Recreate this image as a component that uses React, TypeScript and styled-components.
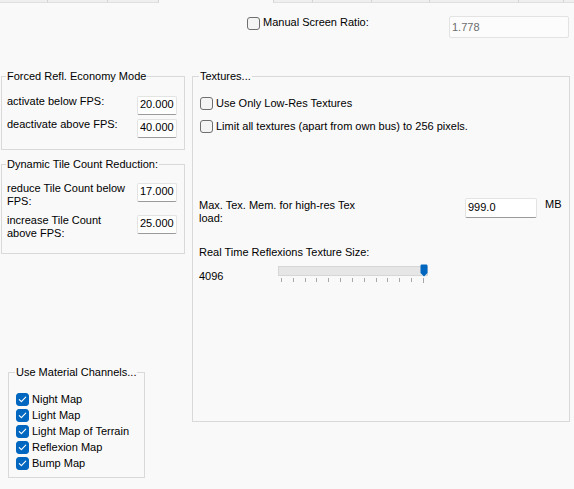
import React from "react";
import styled, { createGlobalStyle } from "styled-components";

const Global = createGlobalStyle`
  html, body { margin: 0; padding: 0; background: #f9f9f9; }
  body { font-family: "Liberation Sans", Arial, sans-serif; font-size: 11px; color: #000; }
  * { box-sizing: border-box; }
`;

const Page = styled.div`
  width: 574px;
  height: 489px;
  overflow: hidden;
  background: #f9f9f9;
  display: flex;
  flex-direction: column;
  font-family: "Liberation Sans", Arial, sans-serif;
  font-size: 11px;
  line-height: 13px;
  color: #000;
`;

const TabStrip = styled.div`
  display: flex;
  flex: none;
  height: 3px;
`;

const TabStub = styled.div<{ $w: number; $edge: "left" | "right" }>`
  flex: none;
  width: ${(p) => p.$w}px;
  height: 3px;
  background: #efefef;
  border-bottom: 1px solid #e0e0e0;
  ${(p) => (p.$edge === "left" ? "border-right: 1px solid #d4d4d4;" : "border-left: 1px solid #d4d4d4;")}
`;

const TabGap = styled.div<{ $w: number }>`
  flex: none;
  width: ${(p) => p.$w}px;
`;

const TopRow = styled.div`
  display: flex;
  align-items: flex-start;
  flex: none;
  height: 22px;
  margin-top: 13px;
  padding-left: 247px;
  padding-right: 5px;
`;

const CheckRow = styled.div<{ $h?: number }>`
  display: flex;
  align-items: center;
  gap: 3px;
  height: ${(p) => p.$h ?? 13}px;
  white-space: nowrap;
`;

const Box = styled.span<{ $checked?: boolean; $nudge?: number }>`
  flex: none;
  width: 13px;
  height: 13px;
  margin-left: ${(p) => p.$nudge ?? 0}px;
  border-radius: 3px;
  display: inline-flex;
  align-items: center;
  justify-content: center;
  background: ${(p) => (p.$checked ? "#0067c0" : "#f4f4f4")};
  border: 1px solid ${(p) => (p.$checked ? "#0067c0" : "#6f6f6f")};
`;

const TopCheck = styled(CheckRow)`
  align-items: flex-start;
  height: auto;
  & > span:first-child {
    margin-top: 1px;
  }
`;

const Field = styled.input<{ $w: number; $h: number; $disabled?: boolean }>`
  flex: none;
  width: ${(p) => p.$w}px;
  height: ${(p) => p.$h}px;
  margin: 0;
  padding: 0 2px 3px;
  font: inherit;
  line-height: 13px;
  color: ${(p) => (p.$disabled ? "#6d6d6d" : "#000")};
  background: ${(p) => (p.$disabled ? "#fcfcfc" : "#ffffff")};
  border: 1px solid #e3e3e3;
  border-bottom-color: ${(p) => (p.$disabled ? "#e3e3e3" : "#9a9a9a")};
  border-radius: 2px;
  outline: none;
`;

const RatioField = styled(Field)`
  margin-left: auto;
  padding: 0 2px;
`;

const Main = styled.div`
  display: flex;
  align-items: flex-start;
  flex: none;
  margin-top: 32px;
`;

const LeftCol = styled.div`
  display: flex;
  flex-direction: column;
  flex: none;
  width: 184px;
  margin-left: 1px;
`;

const Group = styled.fieldset<{ $w?: number; $h?: number; $mt?: number; $ml?: number }>`
  margin: ${(p) => p.$mt ?? 0}px 0 0 ${(p) => p.$ml ?? 0}px;
  padding: 0;
  min-width: 0;
  width: ${(p) => (p.$w ? `${p.$w}px` : "auto")};
  height: ${(p) => (p.$h ? `${p.$h}px` : "auto")};
  border: 1px solid #d9d9d9;
  flex: none;
`;

const Legend = styled.legend<{ $indent: number }>`
  padding: 0 1px;
  margin-left: ${(p) => p.$indent}px;
  line-height: 13px;
  white-space: nowrap;
`;

const GroupBody = styled.div<{ $pad: string; $gap?: number }>`
  display: flex;
  flex-direction: column;
  padding: ${(p) => p.$pad};
  gap: ${(p) => p.$gap ?? 0}px;
`;

const FpsRow = styled.div`
  display: grid;
  grid-template-columns: 1fr 40px;
  align-items: start;
`;

const FpsLabel = styled.span`
  max-width: 122px;
  line-height: 13px;
`;

const FpsField = styled(Field)`
  margin-top: 1px;
  padding: 0 2px 3px;
`;

const MemRow = styled.div`
  display: grid;
  grid-template-columns: 266px 72px auto;
  align-items: start;
  margin-top: 65px;
`;

const MemLabel = styled.span`
  max-width: 170px;
  margin-top: 1px;
`;

const Unit = styled.span`
  margin-left: 8px;
`;

const SizeLabel = styled.div`
  margin-top: 21px;
`;

const SliderRow = styled.div`
  display: grid;
  grid-template-columns: 79px 150px;
  margin-top: 5px;
`;

const SliderValue = styled.span`
  margin-top: 6px;
`;

const Slider = styled.div`
  position: relative;
  height: 20px;
`;

const Track = styled.div`
  margin-top: 2px;
  height: 10px;
  background: #e6e6e6;
  border: 1px solid #d6d6d6;
`;

const Ticks = styled.div`
  display: flex;
  justify-content: space-between;
  margin-top: 2px;
  padding: 0 4px 0 3px;
`;

const Tick = styled.span<{ $long?: boolean }>`
  width: 1px;
  height: ${(p) => (p.$long ? 5 : 4)}px;
  background: #a6a6a6;
`;

const Thumb = styled.svg`
  position: absolute;
  top: 0;
  right: 0;
  display: block;
`;

const Check = () => (
  <svg width="9" height="9" viewBox="0 0 9 9">
    <path d="M1.3 4.6 L3.4 6.7 L7.7 2.2" fill="none" stroke="#ffffff" strokeWidth="1.1" strokeLinecap="round" strokeLinejoin="round" />
  </svg>
);

const CheckBox = ({ checked, nudge }: { checked?: boolean; nudge?: number }) => (
  <Box $checked={checked} $nudge={nudge}>{checked ? <Check /> : null}</Box>
);

const leftTabs = [48, 60, 51];
const rightTabs = [39, 59, 58, 89, 45, 11];
const materials = ["Night Map", "Light Map", "Light Map of Terrain", "Reflexion Map", "Bump Map"];

export default function App() {
  return (
    <>
      <Global />
      <Page>
        <TabStrip>
          {leftTabs.map((w, i) => (
            <TabStub key={`l${i}`} $w={w} $edge="left" />
          ))}
          <TabGap $w={114} />
          {rightTabs.map((w, i) => (
            <TabStub key={`r${i}`} $w={w} $edge="right" />
          ))}
        </TabStrip>

        <TopRow>
          <TopCheck>
            <CheckBox />
            <span>Manual Screen Ratio:</span>
          </TopCheck>
          <RatioField $w={120} $h={22} $disabled readOnly value="1.778" />
        </TopRow>

        <Main>
          <LeftCol>
            <Group>
              <Legend $indent={4}>Forced Refl. Economy Mode</Legend>
              <GroupBody $pad="12px 7px 11px 5px" $gap={3}>
                <FpsRow>
                  <FpsLabel>activate below FPS:</FpsLabel>
                  <FpsField $w={40} $h={19} readOnly value="20.000" />
                </FpsRow>
                <FpsRow>
                  <FpsLabel>deactivate above FPS:</FpsLabel>
                  <FpsField $w={40} $h={19} readOnly value="40.000" />
                </FpsRow>
              </GroupBody>
            </Group>

            <Group $mt={8}>
              <Legend $indent={4}>Dynamic Tile Count Reduction:</Legend>
              <GroupBody $pad="11px 7px 13px 5px" $gap={6}>
                <FpsRow>
                  <FpsLabel>reduce Tile Count below FPS:</FpsLabel>
                  <FpsField $w={40} $h={19} readOnly value="17.000" />
                </FpsRow>
                <FpsRow>
                  <FpsLabel>increase Tile Count above FPS:</FpsLabel>
                  <FpsField $w={40} $h={19} readOnly value="25.000" />
                </FpsRow>
              </GroupBody>
            </Group>

            <Group $mt={112} $ml={7} $w={137}>
              <Legend $indent={6}>Use Material Channels...</Legend>
              <GroupBody $pad="12px 7px 6px 7px">
                {materials.map((m) => (
                  <CheckRow key={m} $h={16}>
                    <CheckBox checked />
                    <span>{m}</span>
                  </CheckRow>
                ))}
              </GroupBody>
            </Group>
          </LeftCol>

          <Group $ml={7} $w={378} $h={352}>
            <Legend $indent={6}>Textures...</Legend>
            <GroupBody $pad="14px 6px 0 6px">
              <CheckRow>
                <CheckBox nudge={1} />
                <span>Use Only Low-Res Textures</span>
              </CheckRow>
              <CheckRow style={{ marginTop: 10 }}>
                <CheckBox nudge={1} />
                <span>Limit all textures (apart from own bus) to 256 pixels.</span>
              </CheckRow>

              <MemRow>
                <MemLabel>Max. Tex. Mem. for high-res Tex load:</MemLabel>
                <Field $w={72} $h={20} readOnly value="999.0" style={{ paddingBottom: 2 }} />
                <Unit>MB</Unit>
              </MemRow>

              <SizeLabel>Real Time Reflexions Texture Size:</SizeLabel>
              <SliderRow>
                <SliderValue>4096</SliderValue>
                <Slider>
                  <Track />
                  <Ticks>
                    {Array.from({ length: 13 }, (_, i) => (
                      <Tick key={i} $long={i === 12} />
                    ))}
                  </Ticks>
                  <Thumb width="8" height="13" viewBox="0 0 8 13">
                    <path d="M0.5 1.8 Q0.5 0.5 1.8 0.5 H6.2 Q7.5 0.5 7.5 1.8 V9 L4 12.5 L0.5 9 Z" fill="#0067c0" />
                  </Thumb>
                </Slider>
              </SliderRow>
            </GroupBody>
          </Group>
        </Main>
      </Page>
    </>
  );
}
